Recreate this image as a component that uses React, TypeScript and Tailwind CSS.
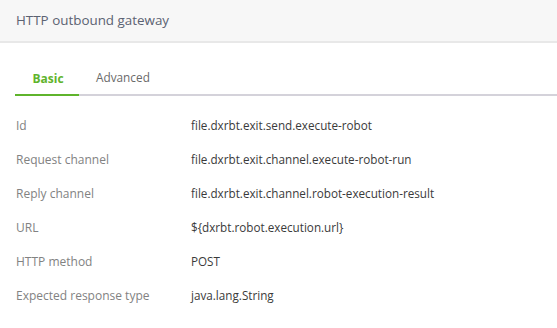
import React from "react";

const rows = [
  { label: "Id", value: "file.dxrbt.exit.send.execute-robot" },
  { label: "Request channel", value: "file.dxrbt.exit.channel.execute-robot-run" },
  { label: "Reply channel", value: "file.dxrbt.exit.channel.robot-execution-result" },
  { label: "URL", value: "${dxrbt.robot.execution.url}" },
  { label: "HTTP method", value: "POST" },
  { label: "Expected response type", value: "java.lang.String" },
];

export default function App() {
  return (
    <div className="w-[557px] h-[328px] bg-white overflow-hidden" style={{ fontFamily: '"Open Sans", "Noto Sans", sans-serif' }}>
      <div className="h-[43px] bg-[#f7f7f7] border-b-2 border-[#e8e8e8] flex items-center pl-4">
        <span className="text-[13.4px] text-[#5b6272]">HTTP outbound gateway</span>
      </div>

      <div className="pl-[15px] mt-[18px]">
        <div className="flex items-end border-b-2 border-[#d4d2da]">
          <div className="w-16 h-[33px] flex items-center justify-center pl-[2px] text-[12px] font-bold text-[#5fb42c] border-b-2 border-[#5fb42c] -mb-[2px]">
            Basic
          </div>
          <div className="ml-[17px] h-[33px] flex items-center text-[11.8px] text-[#6a6a6a]">Advanced</div>
        </div>
      </div>

      <div className="mt-[13px] flex flex-col">
        {rows.map((r) => (
          <div key={r.label} className="flex items-center h-[34px] pl-4 text-[12px]">
            <div className="w-[175px] text-[#828282]">{r.label}</div>
            <div className="text-[11.7px] text-[#3a3a3a]">{r.value}</div>
          </div>
        ))}
      </div>
    </div>
  );
}
